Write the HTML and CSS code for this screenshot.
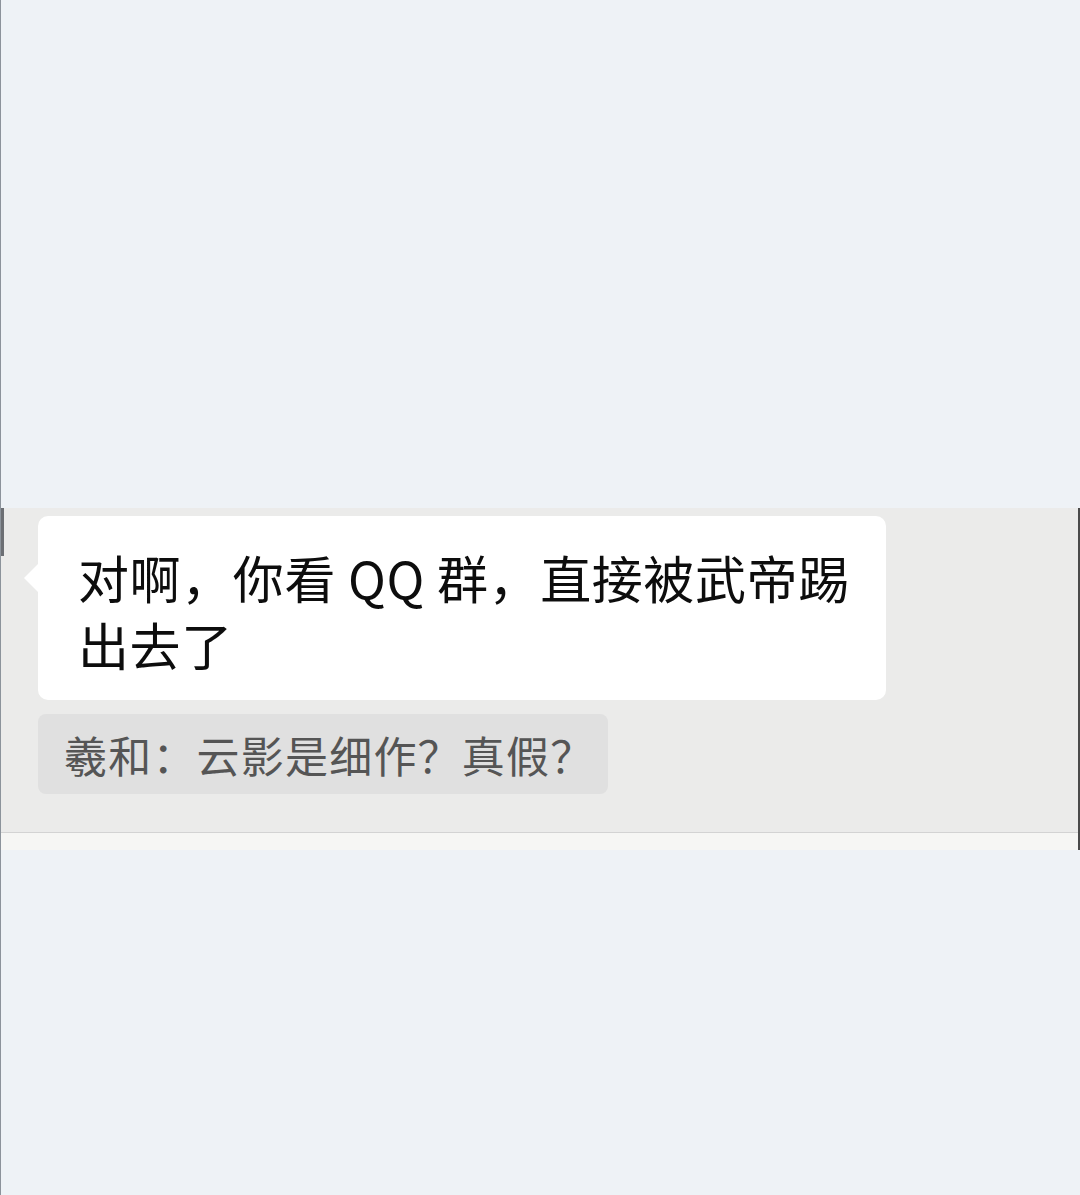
FILE: index.html
```html
<!DOCTYPE html>
<html lang="zh-CN">
<head>
    <meta charset="UTF-8">
    <meta name="viewport" content="width=device-width, initial-scale=1.0">
    <title>聊天截图</title>
    <link rel="stylesheet" href="styles.css">
</head>
<body>

<div class="page">
    <div class="shot">
        <div class="avatar-edge"></div>
        <div class="bubble">
            <p class="msg">对啊，你看 QQ 群，直接被武帝踢出去了</p>
        </div>
        <div class="quote">羲和：云影是细作？真假？</div>
        <div class="shot-foot"></div>
    </div>
</div>

</body>
</html>
```

FILE: styles.css
```css
* {
    box-sizing: border-box;
    font-family: "Noto Sans CJK SC", "Noto Sans", sans-serif;
}

body {
    margin: 0;
    background-color: #eef2f6;
}

.page {
    min-height: 1195px;
    border-left: 1px solid #8c939b;
    padding-top: 508px;
}

.shot {
    position: relative;
    width: 1079px;
    background-color: #ebebea;
    border-right: 2px solid #4a4a4a;
    padding-top: 8px;
}

/* sliver of the cut-off avatar on the left */
.avatar-edge {
    position: absolute;
    left: 0;
    top: 0;
    width: 3px;
    height: 48px;
    background-color: #6c6f74;
}

.bubble {
    position: relative;
    margin-left: 37px;
    width: 848px;
    padding: 28px 30px 22px 40px;
    background-color: #ffffff;
    border-radius: 10px;
}

.bubble::before {
    content: "";
    position: absolute;
    left: -14px;
    top: 48px;
    border-top: 14px solid transparent;
    border-bottom: 14px solid transparent;
    border-right: 14px solid #ffffff;
}

.msg {
    margin: 0;
    width: 790px;
    font-size: 51px;
    line-height: 67px;
    letter-spacing: 0.6px;
    color: #0d0d0d;
}

.quote {
    display: flex;
    align-items: center;
    margin: 14px 0 0 37px;
    width: 570px;
    height: 80px;
    padding-left: 26px;
    background-color: #e0e0e0;
    border-radius: 8px;
    font-size: 43px;
    letter-spacing: 1.2px;
    color: #555555;
}

.shot-foot {
    margin-top: 38px;
    height: 18px;
    border-top: 1px solid #d3d3d3;
    background-color: #f6f6f4;
}
```
